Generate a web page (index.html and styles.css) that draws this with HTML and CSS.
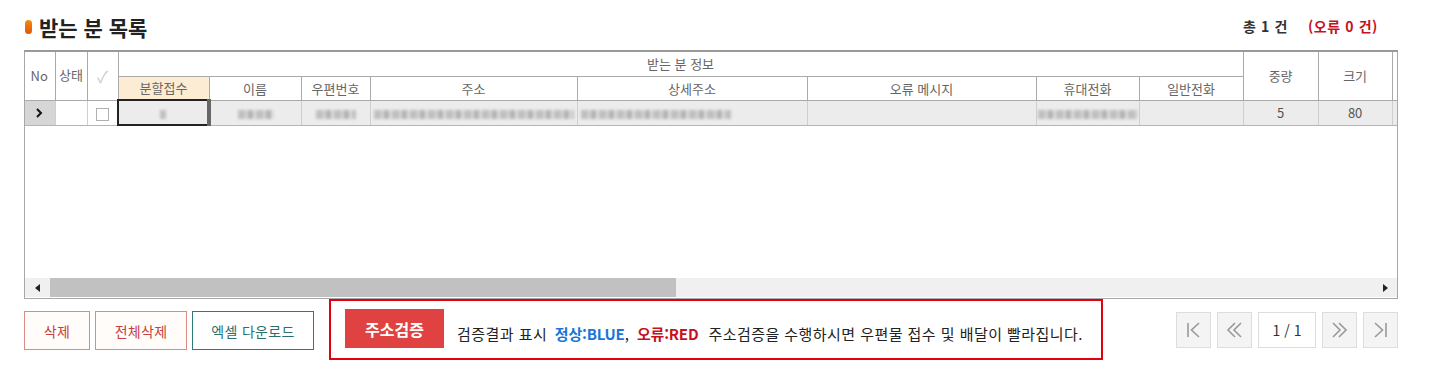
FILE: index.html
```html
<!DOCTYPE html>
<html lang="ko">
<head>
<meta charset="utf-8">
<title>받는 분 목록</title>
<link rel="stylesheet" href="styles.css">
</head>
<body>
<div class="page">
  <div class="title-row">
    <h2 class="title"><span class="pill"></span>받는 분 목록</h2>
    <div class="count"><span class="total">총 1 건</span><span class="err">(오류 0 건)</span></div>
  </div>

  <div class="grid">
    <div class="grid-body">
      <table class="tbl">
        <colgroup>
          <col style="width:31px"><col style="width:32px"><col style="width:31px">
          <col style="width:91px"><col style="width:92px"><col style="width:69px">
          <col style="width:207px"><col style="width:230px"><col style="width:229px">
          <col style="width:103px"><col style="width:104px"><col style="width:75px">
          <col style="width:74px"><col style="width:60px">
        </colgroup>
        <thead>
          <tr class="h1">
            <th rowspan="2">No</th>
            <th rowspan="2" class="top">상태</th>
            <th rowspan="2" class="chk-h">✓</th>
            <th colspan="8">받는 분 정보</th>
            <th rowspan="2">중량</th>
            <th rowspan="2">크기</th>
            <th rowspan="2"></th>
          </tr>
          <tr class="h2">
            <th class="split">분할접수</th>
            <th>이름</th>
            <th>우편번호</th>
            <th>주소</th>
            <th>상세주소</th>
            <th>오류 메시지</th>
            <th>휴대전화</th>
            <th>일반전화</th>
          </tr>
        </thead>
        <tbody>
          <tr class="row">
            <td class="rh"><svg width="10" height="12" viewBox="0 0 10 12"><path d="M3 2 L7 6 L3 10" fill="none" stroke="#111" stroke-width="2"/></svg></td>
            <td class="white"></td>
            <td class="white"><span class="cbox"></span></td>
            <td class="sel"><span class="blur b-s"></span></td>
            <td><span class="blur b-name"></span></td>
            <td><span class="blur b-zip"></span></td>
            <td class="left"><span class="blur b-addr"></span></td>
            <td class="left"><span class="blur b-det"></span></td>
            <td></td>
            <td><span class="blur b-tel"></span></td>
            <td></td>
            <td>5</td>
            <td>80</td>
            <td></td>
          </tr>
        </tbody>
      </table>
    </div>
    <div class="hscroll">
      <span class="arrow"><svg width="6" height="8" viewBox="0 0 6 8"><path d="M5 0 L0 4 L5 8 Z" fill="#222"/></svg></span>
      <div class="track"><div class="thumb"></div></div>
      <span class="arrow"><svg width="6" height="8" viewBox="0 0 6 8"><path d="M1 0 L6 4 L1 8 Z" fill="#222"/></svg></span>
    </div>
  </div>

  <div class="bottom">
    <div class="actions">
      <button class="btn red w1">삭제</button>
      <button class="btn red w2">전체삭제</button>
      <button class="btn teal w3">엑셀 다운로드</button>
    </div>
    <div class="verify">
      <button class="vbtn">주소검증</button>
      <p class="vtext">검증결과 표시 <b class="blue">정상:BLUE</b>, <b class="redt">오류:RED</b><span class="gap"></span>주소검증을 수행하시면 우편물 접수 및 배달이 빨라집니다.</p>
    </div>
    <div class="pager">
      <span class="pbtn"><svg width="35" height="36" viewBox="0 0 35 36"><path d="M12 11 V25 M23 11 L15.5 18 L23 25" fill="none" stroke="#999" stroke-width="1.6"/></svg></span>
      <span class="pbtn"><svg width="35" height="36" viewBox="0 0 35 36"><path d="M18 11 L11 18 L18 25 M24 11 L17 18 L24 25" fill="none" stroke="#999" stroke-width="1.6"/></svg></span>
      <span class="pnum">1 / 1</span>
      <span class="pbtn"><svg width="35" height="36" viewBox="0 0 35 36"><path d="M11 11 L18 18 L11 25 M17 11 L24 18 L17 25" fill="none" stroke="#999" stroke-width="1.6"/></svg></span>
      <span class="pbtn"><svg width="35" height="36" viewBox="0 0 35 36"><path d="M12 11 L19.5 18 L12 25 M23 11 V25" fill="none" stroke="#999" stroke-width="1.6"/></svg></span>
    </div>
  </div>
</div>
</body>
</html>
```

FILE: styles.css
```css
* { box-sizing: border-box; }
html, body { margin: 0; padding: 0; background: #fff; }
body {
  font-family: "Noto Sans CJK KR", "Noto Sans", sans-serif;
  color: #333;
  width: 1430px;
  height: 367px;
  overflow: hidden;
}
.page { padding: 0 32px 0 24px; }

.title-row {
  height: 50px;
  display: flex;
  align-items: center;
  justify-content: space-between;
  padding-top: 4px;
}
.title {
  margin: 0;
  font-size: 21px;
  font-weight: 700;
  color: #222;
  display: flex;
  align-items: center;
  letter-spacing: 0;
}
.pill {
  display: inline-block;
  width: 7px;
  height: 14px;
  border-radius: 4px;
  background: linear-gradient(#f58a10, #dd5800);
  margin: 0 7px 0 1px;
}
.count {
  font-size: 14px;
  font-weight: 700;
  display: flex;
  gap: 20px;
  padding-right: 20px;
  margin-top: -3px;
  letter-spacing: 0.6px;
}
.total { color: #333; }
.err { color: #c8101e; }

.grid {
  width: 1374px;
  height: 249px;
  border: 1px solid #a8a8a8;
  border-top: 2px solid #999;
  display: flex;
  flex-direction: column;
  overflow: hidden;
}
.grid-body { flex: 1; overflow: hidden; }
.tbl {
  border-collapse: collapse;
  table-layout: fixed;
  width: 1428px;
  font-size: 13px;
  margin-left: -1px;
}
.tbl th {
  font-weight: 400;
  color: #666;
  border: 1px solid #aaa;
  background: #fff;
  padding: 0;
  text-align: center;
  white-space: nowrap;
  overflow: hidden;
}
.tbl th:first-child { border-left: none; }
.tbl tr.h1 th { border-top: none; }
.tbl tr.h1 { height: 24px; }
.tbl tr.h2 { height: 24px; }
.tbl th.top { vertical-align: top; padding-top: 13px; }
.tbl th.chk-h { color: #ccc; font-size: 16px; }
.tbl th.split { background: #fdecd4; }
.tbl tr.row { height: 25px; }
.tbl td {
  background: #ececec;
  border: 1px solid #cfcfcf;
  border-top: none;
  border-bottom: 1px solid #b5b5b5;
  text-align: center;
  font-size: 13px;
  color: #555;
  padding: 0;
  white-space: nowrap;
  overflow: hidden;
}
.tbl td.left { text-align: left; padding-left: 3px; }
.tbl td.rh { background: #d6d6d6; border-left: none; }
.tbl td.rh svg { display: block; margin: 0 auto; }
.tbl td.white { background: #fff; }
.tbl td.sel {
  border: 2px solid #222;
  border-right: 4px solid #666;
}
.cbox {
  display: inline-block;
  width: 13px;
  height: 13px;
  border: 1px solid #b0b0b0;
  background: #fff;
  vertical-align: middle;
}
.blur {
  display: inline-block;
  height: 9px;
  vertical-align: middle;
  background: repeating-linear-gradient(90deg, #b8b8b8 0 7px, #d0d0d0 7px 10px, #a9a9a9 10px 15px, #dadada 15px 18px);
  filter: blur(1.4px);
  opacity: 0.85;
}
.b-s { width: 6px; }
.b-name { width: 36px; }
.b-zip { width: 40px; }
.b-addr { width: 200px; }
.b-det { width: 150px; }
.b-tel { width: 100px; }

.hscroll {
  height: 19px;
  margin-bottom: 1px;
  background: #f0f0f0;
  display: flex;
  align-items: center;
}
.arrow {
  width: 25px;
  height: 19px;
  display: flex;
  align-items: center;
  justify-content: center;
}
.track { flex: 1; height: 19px; }
.thumb { width: 626px; height: 19px; background: #c1c1c1; }

.bottom {
  height: 61px;
  display: flex;
  align-items: flex-start;
  width: 1374px;
}
.actions {
  display: flex;
  gap: 5px;
  padding-top: 12px;
}
.btn {
  height: 39px;
  font-family: inherit;
  font-size: 14px;
  padding: 0;
  cursor: pointer;
  letter-spacing: 0.3px;
}
.btn.red { border: 1px solid #db8a86; color: #c8413f; background: #fffcfa; }
.btn.teal { border: 1px solid #2c7b78; color: #2b6f6d; background: #fff; }
.w1 { width: 66px; }
.w2 { width: 92px; }
.w3 { width: 122px; }

.verify {
  margin-left: 15px;
  width: 774px;
  height: 61px;
  border: 2px solid #e3000f;
  display: flex;
  align-items: center;
  padding: 0 0 0 14px;
}
.vbtn {
  width: 99px;
  height: 39px;
  background: #e04241;
  color: #fff;
  border: none;
  font-family: inherit;
  font-size: 16px;
  font-weight: 700;
  padding: 0;
  margin-top: -2px;
}
.vtext {
  margin: 8px 0 0 13px;
  font-size: 15px;
  color: #222;
  white-space: nowrap;
  letter-spacing: 0.45px;
}
.vtext b { font-weight: 600; letter-spacing: -0.2px; }
.blue { color: #1a75d8; margin-left: 3px; }
.redt { color: #c8101e; margin-left: 3px; }
.gap { display: inline-block; width: 10px; }

.pager {
  margin-left: auto;
  display: flex;
  gap: 6px;
  padding-top: 13px;
}
.pbtn {
  width: 35px;
  height: 36px;
  background: #f4f4f4;
  border: 1px solid #ddd;
  display: block;
}
.pbtn svg { display: block; margin: -1px; }
.pnum {
  width: 58px;
  height: 36px;
  border: 1px solid #ddd;
  background: #fff;
  font-size: 14px;
  color: #333;
  display: flex;
  align-items: center;
  justify-content: center;
}
```
